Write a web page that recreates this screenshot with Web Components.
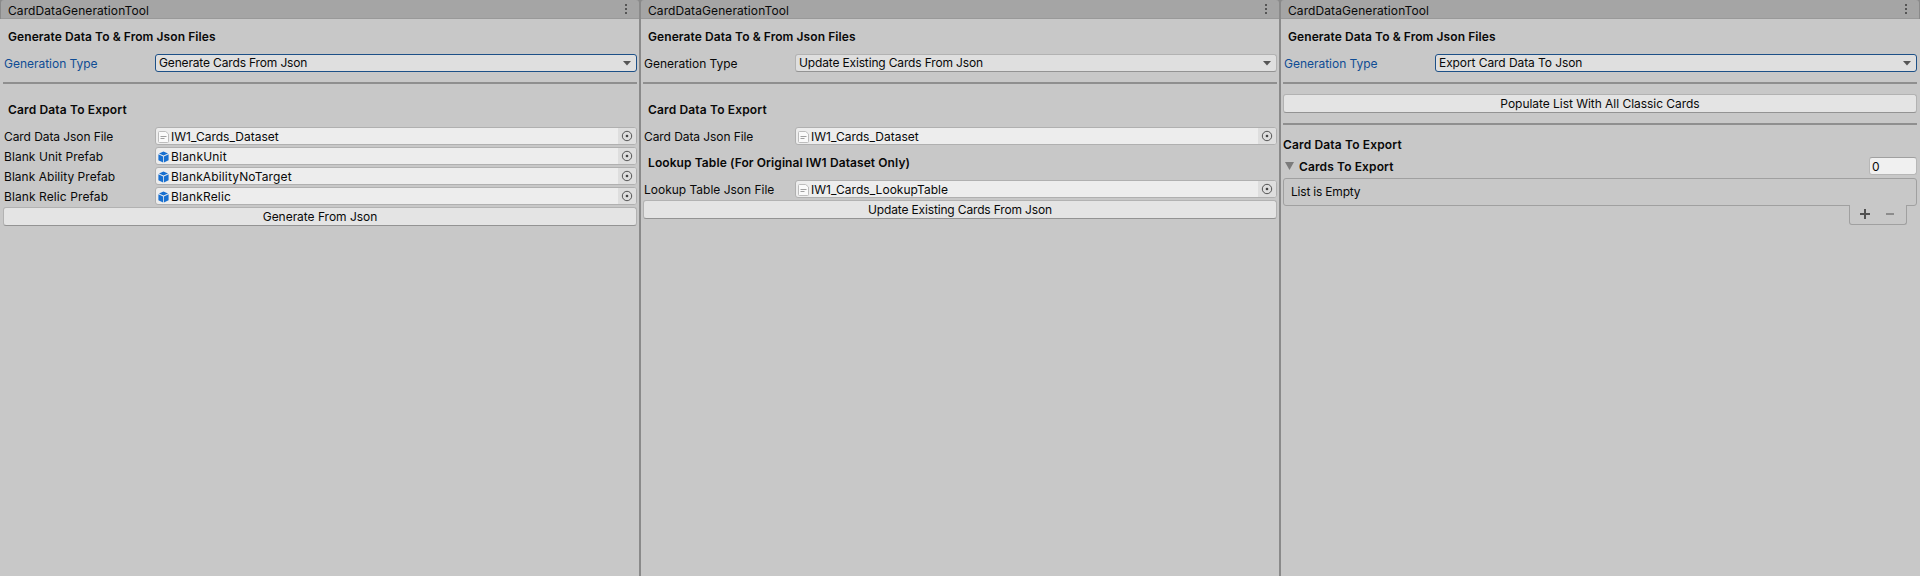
<!DOCTYPE html>
<html lang="en"><head><meta charset="utf-8"><title>CardDataGenerationTool</title>
<style>
html,body{margin:0;height:100%;background:#c8c8c8}
body{font:12px/18px Inter,sans-serif;color:#090909;overflow:hidden}
</style></head><body>
<tool-workspace>
<tool-window heading="CardDataGenerationTool">
<tool-heading track=".075">Generate Data To &amp; From Json Files</tool-heading>
<field-row label="Generation Type" track="-.02" active><drop-down track="-.155" active>Generate Cards From Json</drop-down></field-row>
<rule-line></rule-line>
<tool-heading track=".15" style="--top:7px">Card Data To Export</tool-heading>
<field-row label="Card Data Json File" track="-.08"><object-field kind="text">IW1_Cards_Dataset</object-field></field-row>
<field-row label="Blank Unit Prefab" track=".06"><object-field kind="prefab" track=".2">BlankUnit</object-field></field-row>
<field-row label="Blank Ability Prefab" track=".03"><object-field kind="prefab" track=".14">BlankAbilityNoTarget</object-field></field-row>
<field-row label="Blank Relic Prefab" track=".09"><object-field kind="prefab" track=".164">BlankRelic</object-field></field-row>
<push-button track="-.03">Generate From Json</push-button>
</tool-window>
<tool-window heading="CardDataGenerationTool">
<tool-heading track=".075">Generate Data To &amp; From Json Files</tool-heading>
<field-row label="Generation Type" track="-.02"><drop-down track="-.153">Update Existing Cards From Json</drop-down></field-row>
<rule-line></rule-line>
<tool-heading track=".15" style="--top:7px">Card Data To Export</tool-heading>
<field-row label="Card Data Json File" track="-.08"><object-field kind="text">IW1_Cards_Dataset</object-field></field-row>
<tool-heading track=".09" style="--top:7px;--bottom:8px">Lookup Table (For Original IW1 Dataset Only)</tool-heading>
<field-row label="Lookup Table Json File" track="-.01"><object-field kind="text" track=".03">IW1_Cards_LookupTable</object-field></field-row>
<push-button track="-.153">Update Existing Cards From Json</push-button>
</tool-window>
<tool-window heading="CardDataGenerationTool">
<tool-heading track=".075">Generate Data To &amp; From Json Files</tool-heading>
<field-row label="Generation Type" track="-.02" active><drop-down track="-.08" active>Export Card Data To Json</drop-down></field-row>
<rule-line></rule-line>
<push-button track="-.04">Populate List With All Classic Cards</push-button>
<rule-line style="--top:10px"></rule-line>
<tool-heading track=".15" flush>Card Data To Export</tool-heading>
<card-list heading="Cards To Export" count="0">List is Empty</card-list>
</tool-window>
</tool-workspace>
<script>
const define=(name,render)=>customElements.define(name,class extends HTMLElement{
  connectedCallback(){
    if(this.shadowRoot)return;
    const t=document.createElement('template');
    t.innerHTML='<style>*{box-sizing:border-box}:host{box-sizing:border-box}</style>'+render(this);
    this.attachShadow({mode:'open'}).append(t.content.cloneNode(true));
  }
});
const track=e=>`letter-spacing:${e.getAttribute('track')||0}px`;
define('tool-workspace',()=>`<style>:host{display:grid;grid-template-columns:639px 638px 639px;column-gap:2px;height:576px;background:#8a8a8a}</style><slot></slot>`);
define('tool-window',e=>`<style>
:host{display:flex;flex-direction:column;background:linear-gradient(#8a8a8a 19px,#c8c8c8 19px);min-width:0}
header{height:19px;flex:none;background:#a5a5a5;border-bottom:1px solid #999;display:flex;justify-content:space-between;padding:2px 11px 0 7px;line-height:18px;letter-spacing:.09px;border-radius:3px 3px 0 0}
header svg{margin-top:2px}
main{display:flex;flex-direction:column;padding:0 2px 0 3px}
:host(:first-child) header{margin-left:1px}
:host(:not(:first-child)) main{padding-left:2px}
:host(:last-child) header{margin-right:1px}
:host(:last-child) main{padding-right:3px}
</style><header><span>${e.getAttribute('heading')}</span><svg width="4" height="11"><path d="M1 0h2v2H1zM1 4h2v2H1zM1 8h2v2H1z" fill="#555"/></svg></header><main><slot></slot></main>`);
define('tool-heading',e=>`<style>
:host{display:block;font-weight:600;line-height:18px;padding-left:5px;margin-top:var(--top,9px);margin-bottom:var(--bottom,8px);${track(e)}}
:host([flush]){padding-left:0;margin:1px 0 3px}
</style><slot></slot>`);
define('field-row',e=>`<style>
:host{display:grid;grid-template-columns:152px 1fr;height:18px;margin-bottom:2px}
span{padding:1px 0 0 1px;white-space:nowrap;${track(e)}}
:host([active]) span{color:#0f4c94}
</style><span>${e.getAttribute('label')}</span><slot></slot>`);
define('drop-down',e=>`<style>
:host{display:flex;justify-content:space-between;align-items:center;height:18px;background:#dfdfdf;border:1px solid #b2b2b2;border-bottom-color:#939393;border-radius:3px;padding:0 5px 0 3px;line-height:16px;${track(e)}}
:host([active]){border-color:#1d5087}
</style><span><slot></slot></span><svg width="8" height="5"><path d="M0 0h8L4 4.5z" fill="#555"/></svg>`);
define('rule-line',()=>`<style>:host{display:block;height:2px;background:#8f8f8f;margin:var(--top,8px) 0 10px}</style>`);
const icons={
text:`<svg width="11" height="12"><path d="M.5 1.5a1 1 0 0 1 1-1h6.2L10.5 3v7.5a1 1 0 0 1-1 1h-8a1 1 0 0 1-1-1z" fill="#fafafa" stroke="#bdbdbd"/><path d="M2.5 5.5h6M2.5 7.5h4" stroke="#a0a0a0"/></svg>`,
prefab:`<svg width="11" height="12"><path d="M5.5 .5 10 2.4 5.5 4.4 1 2.4zM.4 3.3l4.7 2.1v6.1L.4 9.3zM10.6 3.3 5.9 5.4v6.1l4.7-2.2z" fill="#176fd0"/></svg>`};
define('object-field',e=>`<style>
:host{display:flex;height:18px;background:#ededed;border:1px solid #b0b0b0;border-radius:3px;line-height:18px;overflow:hidden;${track(e)}}
.icon{width:15px;display:flex;padding:3px 0 0 2px}
.name{flex:1;height:16px}
.pick{width:18px;height:16px;background:#dedede;display:grid;place-items:center}
</style><span class="icon">${icons[e.getAttribute('kind')]}</span><span class="name"><slot></slot></span><span class="pick"><svg width="12" height="12"><circle cx="6" cy="6" r="4.7" fill="none" stroke="#555"/><circle cx="6" cy="6" r="1.3" fill="#444"/></svg></span>`);
define('push-button',e=>`<style>
:host{display:block;height:19px;text-align:center;background:#e4e4e4;border:1px solid #b2b2b2;border-bottom-color:#939393;border-radius:3px;line-height:17px;${track(e)}}
</style><slot></slot>`);
define('card-list',e=>`<style>
:host{display:block}
.top{display:flex;height:18px;align-items:center}
.top svg{margin:0 5px 0 2px}
b{font-weight:600;letter-spacing:.12px;flex:1;padding-top:1px}
.count{width:48px;height:18px;background:#f0f0f0;border:1px solid #b7b7b7;border-top-color:#a0a0a0;border-radius:3px;padding-left:2px;line-height:17px}
.box{margin-top:3px;height:28px;border:1px solid #a0a0a0;border-radius:3px;padding:0 7px;line-height:26px;letter-spacing:-.2px}
.foot{position:relative;margin:-1px 10px 0 auto;width:58px;height:20px;background:#c8c8c8;border:1px solid #a0a0a0;border-top:0;border-radius:0 0 3px 3px;display:flex;padding:4px 0 0 10px;gap:16px}
</style><div class="top"><svg width="9" height="8"><path d="M0 0h9L4.5 8z" fill="#7b7b7b"/></svg><b>${e.getAttribute('heading')}</b><span class="count">${e.getAttribute('count')}</span></div>
<div class="box"><slot></slot></div>
<div class="foot"><svg width="10" height="10"><path d="M0 5h10M5 0v10" stroke="#505050" stroke-width="2"/></svg><svg width="8" height="10"><path d="M0 5h8" stroke="#8c8c8c" stroke-width="2"/></svg></div>`);
</script></body></html>
